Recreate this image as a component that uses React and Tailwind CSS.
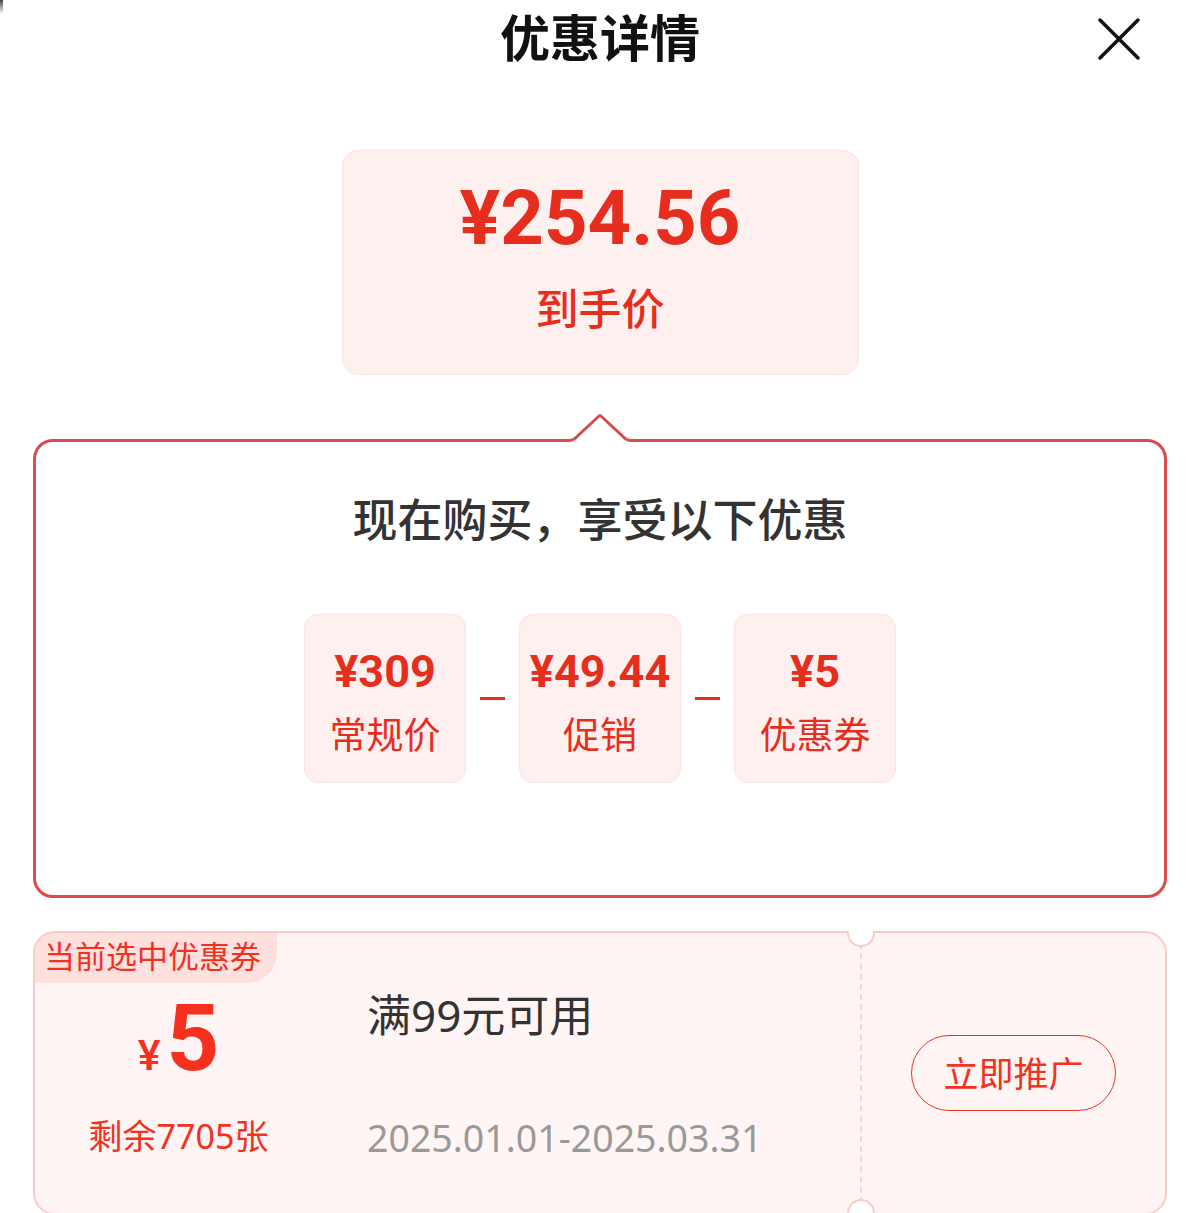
import React from "react";

// 优惠详情弹层
const CJK = "font-['Noto_Sans','Noto_Sans_CJK_SC',sans-serif]";
const NUM = "font-['Roboto','Noto_Sans_CJK_SC',sans-serif]";

const parts = [
  { price: "¥309", label: "常规价" },
  { price: "¥49.44", label: "促销" },
  { price: "¥5", label: "优惠券" },
];

function CloseIcon() {
  return (
    <svg width="44" height="44" viewBox="0 0 44 44" fill="none">
      <path d="M3 3L41 41M41 3L3 41" stroke="#111" strokeWidth="3.5" strokeLinecap="round" />
    </svg>
  );
}

function Notch() {
  // 面板顶部的小三角，覆盖在边框上
  return (
    <svg
      className="absolute left-1/2 -translate-x-1/2 top-[-30px]"
      width="70"
      height="33"
      viewBox="0 0 70 33"
      fill="none"
    >
      <path
        d="M0 28.5H4Q8 28.5 11 25.5L35 3L59 25.5Q62 28.5 66 28.5H70V33H0Z"
        fill="#fff"
      />
      <path
        d="M0 28.5H4Q8 28.5 11 25.5L33.5 4.5Q35 3 36.5 4.5L59 25.5Q62 28.5 66 28.5H70"
        stroke="#d84c4c"
        strokeWidth="3"
      />
    </svg>
  );
}

export default function App() {
  return (
    <div className="relative w-[1190px] h-[1213px] overflow-hidden bg-white">
      <div className={`relative w-[1200px] ${CJK}`}>
        <div className="absolute left-0 top-0 w-[3px] h-[14px] bg-gradient-to-b from-[#444] to-transparent" />

        {/* 标题 */}
        <div className="relative h-[76px] flex items-center justify-center">
          <h1 className="text-[50px] leading-none font-bold text-[#111]">优惠详情</h1>
          <button className="absolute right-[59px] top-[17px]">
            <CloseIcon />
          </button>
        </div>

        {/* 到手价 */}
        <div className="mt-[74px] mx-auto w-[517px] h-[225px] rounded-[16px] border border-[#fde2e2] bg-[#fff0f0] flex flex-col items-center pt-[29px]">
          <div className={`${NUM} text-[76px] leading-none font-bold text-[#e62e1f]`}>¥254.56</div>
          <div className="mt-[31px] text-[43px] leading-none font-medium text-[#e62e1f]">到手价</div>
        </div>

        {/* 优惠明细面板 */}
        <div className="relative mt-[64px] mx-[33px] h-[459px] rounded-[20px] border-[3px] border-[#d84c4c] flex flex-col items-center pt-[55px]">
          <Notch />
          <div className="text-[45px] leading-none font-medium text-[#333]">现在购买，享受以下优惠</div>
          <div className="mt-[72px] flex items-center gap-[14px]">
            {parts.map((p, i) => (
              <React.Fragment key={p.label}>
                {i > 0 && <div className="w-[25px] h-[3px] bg-[#e62e1f]" />}
                <div className="w-[162px] h-[169px] rounded-[14px] border border-[#fde2e2] bg-[#fff0f0] flex flex-col items-center pt-[34px]">
                  <div className={`${NUM} text-[45px] leading-none font-bold text-[#e62e1f]`}>{p.price}</div>
                  <div className="mt-[22px] text-[37px] leading-none text-[#e62e1f]">{p.label}</div>
                </div>
              </React.Fragment>
            ))}
          </div>
        </div>

        {/* 当前优惠券 */}
        <div className="relative mt-[33px] mx-[33px] h-[284px] rounded-[22px] border-2 border-[#fbcbc5] bg-[#fff5f4] flex">
          <div className="absolute left-0 top-0 h-[50px] w-[242px] rounded-tl-[20px] rounded-br-[30px] bg-[#fee0df] flex items-center pl-[9px] pb-[3px]">
            <span className="text-[31px] leading-none text-[#f0321e]">当前选中优惠券</span>
          </div>

          <div className="w-[287px] flex flex-col items-center pt-[60px]">
            <div className={`${NUM} flex items-baseline text-[#f5301e] leading-none`}>
              <span className="text-[43px] font-medium">¥</span>
              <span className="ml-[6px] text-[92px] font-bold">5</span>
            </div>
            <div className="mt-[34px] text-[34px] leading-none text-[#f0321e]">剩余7705张</div>
          </div>

          <div className="w-[538px] pl-[45px] pt-[60px]">
            <div className="text-[44px] leading-none text-[#333]">满99元可用</div>
            <div className="mt-[82px] text-[37.5px] leading-none text-[#999]">2025.01.01-2025.03.31</div>
          </div>

          <div className="relative flex-1 flex items-center justify-center border-l-2 border-dashed border-[#fbd3cf]">
            <div className="absolute left-[-15px] top-[-2px] w-[28px] h-[16px] rounded-b-full bg-white border-2 border-t-0 border-[#fbcbc5]" />
            <div className="absolute left-[-15px] bottom-[-2px] w-[28px] h-[16px] rounded-t-full bg-white border-2 border-b-0 border-[#fbcbc5]" />
            <button className="w-[205px] h-[76px] rounded-full border-[1.5px] border-[#f0321e] text-[35px] leading-none text-[#f0321e]">
              立即推广
            </button>
          </div>
        </div>
      </div>
    </div>
  );
}
